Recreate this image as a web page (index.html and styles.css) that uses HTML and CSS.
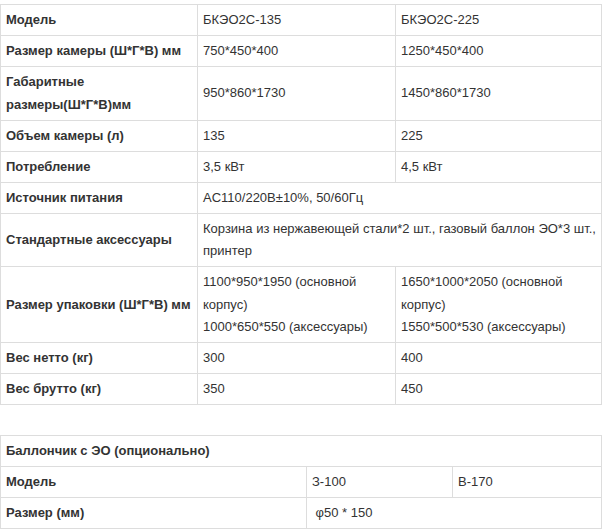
FILE: index.html
```html
<!DOCTYPE html>
<html lang="ru">
<head>
<meta charset="utf-8">
<link rel="stylesheet" href="styles.css">
</head>
<body>
<div class="page">
<table class="spec">
  <colgroup><col class="c1"><col class="c2"><col class="c3"></colgroup>
  <tr><th>Модель</th><td>БКЭО2С-135</td><td>БКЭО2С-225</td></tr>
  <tr><th>Размер камеры (Ш*Г*В) мм</th><td>750*450*400</td><td>1250*450*400</td></tr>
  <tr><th>Габаритные размеры(Ш*Г*В)мм</th><td>950*860*1730</td><td>1450*860*1730</td></tr>
  <tr><th>Объем камеры (л)</th><td>135</td><td>225</td></tr>
  <tr><th>Потребление</th><td>3,5 кВт</td><td>4,5 кВт</td></tr>
  <tr><th>Источник питания</th><td colspan="2">AC110/220В±10%, 50/60Гц</td></tr>
  <tr><th>Стандартные аксессуары</th><td colspan="2">Корзина из нержавеющей стали*2 шт., газовый баллон ЭО*3 шт., принтер</td></tr>
  <tr><th>Размер упаковки (Ш*Г*В) мм</th><td>1100*950*1950 (основной корпус)<br>1000*650*550 (аксессуары)</td><td>1650*1000*2050 (основной корпус)<br>1550*500*530 (аксессуары)</td></tr>
  <tr><th>Вес нетто (кг)</th><td>300</td><td>400</td></tr>
  <tr><th>Вес брутто (кг)</th><td>350</td><td>450</td></tr>
</table>
<div class="gap"></div>
<table class="spec small">
  <colgroup><col class="d1"><col class="d2"><col class="d3"></colgroup>
  <tr><th colspan="3">Баллончик с ЭО (опционально)</th></tr>
  <tr><th>Модель</th><td>З-100</td><td>B-170</td></tr>
  <tr><th>Размер (мм)</th><td colspan="2">&nbsp;φ50 * 150</td></tr>
</table>
</div>
</body>
</html>
```

FILE: styles.css
```css
html, body {
  margin: 0;
  padding: 0;
  background: #fff;
}
.page {
  padding-top: 4px;
  width: 601px;
  font-family: "Liberation Sans", Arial, sans-serif;
  font-size: 13px;
  color: #333;
}
.spec {
  border-collapse: collapse;
  table-layout: fixed;
  width: 601px;
}
.spec th, .spec td {
  border: 1px solid #ddd;
  padding: 4px 5px 3.5px 5px;
  line-height: 22.5px;
  text-align: left;
  vertical-align: middle;
}
.spec th {
  font-weight: bold;
}
.spec td {
  font-weight: normal;
}
.c1 { width: 197px; }
.c2 { width: 198px; }
.c3 { width: 206px; }
.d1 { width: 306px; }
.d2 { width: 146px; }
.d3 { width: 149px; }
.gap {
  height: 30px;
}
```
